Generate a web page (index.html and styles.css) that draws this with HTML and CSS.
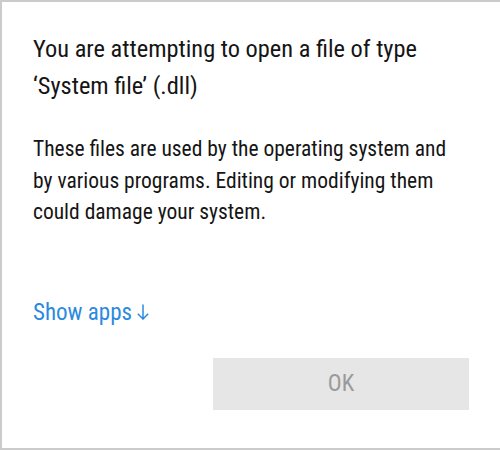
FILE: index.html
```html
<!DOCTYPE html>
<html lang="en">
<head>
<meta charset="utf-8">
<title>Open file</title>
<link rel="stylesheet" href="styles.css">
</head>
<body>
<div class="dialog">
  <h1 class="title">You are attempting to open a file of type ‘System file’ (.dll)</h1>
  <p class="message">These files are used by the operating system and by various programs. Editing or modifying them could damage your system.</p>
  <a class="show-apps" href="#">Show apps <svg class="arrow" width="12" height="16" viewBox="0 0 12 16" aria-hidden="true"><path d="M6 0.5V15M0.8 9.8L6 15L11.2 9.8" fill="none" stroke="currentColor" stroke-width="1.5"/></svg></a>
  <div class="actions">
    <button class="ok" type="button">OK</button>
  </div>
</div>
</body>
</html>
```
FILE: styles.css
```css
html, body {
  margin: 0;
  padding: 0;
  background: #ffffff;
}

.dialog {
  box-sizing: border-box;
  width: 500px;
  height: 450px;
  border-top: 2px solid #cbcbcb;
  border-left: 2px solid #cbcbcb;
  border-bottom: 2px solid #cbcbcb;
  padding: 28px 31px 0 31px;
  display: flex;
  flex-direction: column;
  font-family: "Roboto Condensed", "Roboto", "Liberation Sans", sans-serif;
  color: #151515;
}

.title {
  margin: 0;
  width: 420px;
  font-size: 24.4px;
  font-weight: 400;
  line-height: 37px;
}

.message {
  margin: 29px 0 0 0;
  width: 430px;
  font-size: 21.5px;
  line-height: 31.5px;
}

.show-apps {
  margin-top: 69px;
  align-self: flex-start;
  display: flex;
  align-items: center;
  gap: 5px;
  font-size: 23px;
  line-height: 31px;
  color: #2b8ae0;
  text-decoration: none;
}

.arrow {
  display: block;
}

.actions {
  margin-top: 30px;
  display: flex;
  justify-content: flex-end;
}

.ok {
  width: 256px;
  height: 52px;
  border: none;
  background: #e6e6e6;
  color: #9a9a9a;
  font-family: "Roboto Condensed", "Roboto", "Liberation Sans", sans-serif;
  font-size: 23px;
  padding: 0;
}
```
